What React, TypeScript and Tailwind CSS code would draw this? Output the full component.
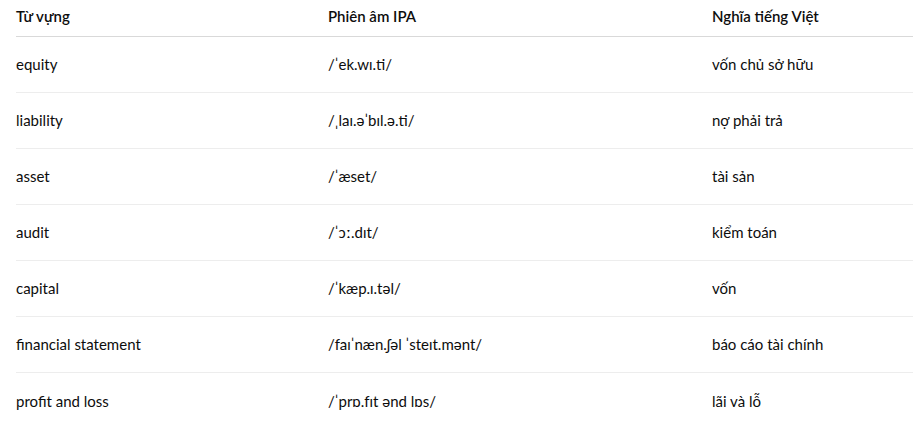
import React from 'react';

interface Term {
  word: string;
  ipa: string;
  meaning: string;
}

const TERMS: Term[] = [
  { word: 'equity', ipa: '/ˈek.wɪ.ti/', meaning: 'vốn chủ sở hữu' },
  { word: 'liability', ipa: '/ˌlaɪ.əˈbɪl.ə.ti/', meaning: 'nợ phải trả' },
  { word: 'asset', ipa: '/ˈæset/', meaning: 'tài sản' },
  { word: 'audit', ipa: '/ˈɔː.dɪt/', meaning: 'kiểm toán' },
  { word: 'capital', ipa: '/ˈkæp.ɪ.təl/', meaning: 'vốn' },
  { word: 'financial statement', ipa: '/faɪˈnæn.ʃəl ˈsteɪt.mənt/', meaning: 'báo cáo tài chính' },
  { word: 'profit and loss', ipa: '/ˈprɒ.fɪt ənd lɒs/', meaning: 'lãi và lỗ' },
];

export default function App() {
  return (
    <div className="w-[913px] h-[439px] overflow-hidden bg-white pl-4 text-[#0d0d0d] font-['Lato',sans-serif] text-[15px]">
      <div className="w-[897px]">
        <div className="grid grid-cols-[312px_384px_1fr] h-[37px] items-center pb-1 border-b border-[#d9d9d9] font-semibold">
          <div>Từ vựng</div>
          <div>Phiên âm IPA</div>
          <div>Nghĩa tiếng Việt</div>
        </div>
        {TERMS.map((t, i) => (
          <div
            key={t.word}
            className={
              i < TERMS.length - 1
                ? 'grid grid-cols-[312px_384px_1fr] h-14 items-center border-b border-[#ededed]'
                : 'grid grid-cols-[312px_384px_1fr] h-14 items-center'
            }
          >
            <div>{t.word}</div>
            <div>{t.ipa}</div>
            <div>{t.meaning}</div>
          </div>
        ))}
      </div>
    </div>
  );
}
